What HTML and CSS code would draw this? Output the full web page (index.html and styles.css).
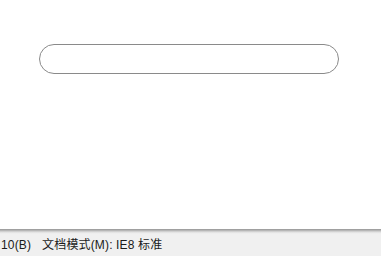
FILE: index.html
```html
<!DOCTYPE html>
<html>
<head>
<meta charset="utf-8">
<link rel="stylesheet" href="styles.css">
</head>
<body>
<div class="page">
  <main class="content">
    <div class="pill"></div>
  </main>
  <footer class="status">
    <span class="status-item">10(B)</span>
    <span class="status-item">文档模式(M): IE8 标准</span>
  </footer>
</div>
</body>
</html>
```
FILE: styles.css
```css
html, body {
  margin: 0;
  padding: 0;
  background: #ffffff;
}
.page {
  width: 381px;
  height: 256px;
  display: flex;
  flex-direction: column;
  overflow: hidden;
}
.content {
  flex: 1;
  padding: 44px 0 0 39px;
}
.pill {
  width: 298px;
  height: 28px;
  border: 1px solid #8a8a8a;
  border-radius: 15px;
  background: #fff;
}
.status {
  height: 27px;
  box-sizing: border-box;
  background: linear-gradient(to bottom, #989898 0px, #a8a8a8 1px, #c4c4c4 2px, #dcdcdc 3px, #ebebeb 4px, #f0f0f0 5px, #f0f0f0 100%);
  display: flex;
  align-items: center;
  gap: 11px;
  padding: 5px 0 0 1px;
  font-family: "Liberation Sans", "Noto Sans CJK SC", sans-serif;
  font-size: 12px;
  letter-spacing: 0.15px;
  color: #1a1a1a;
  white-space: nowrap;
}
.status-item {
  line-height: 14px;
}
```
